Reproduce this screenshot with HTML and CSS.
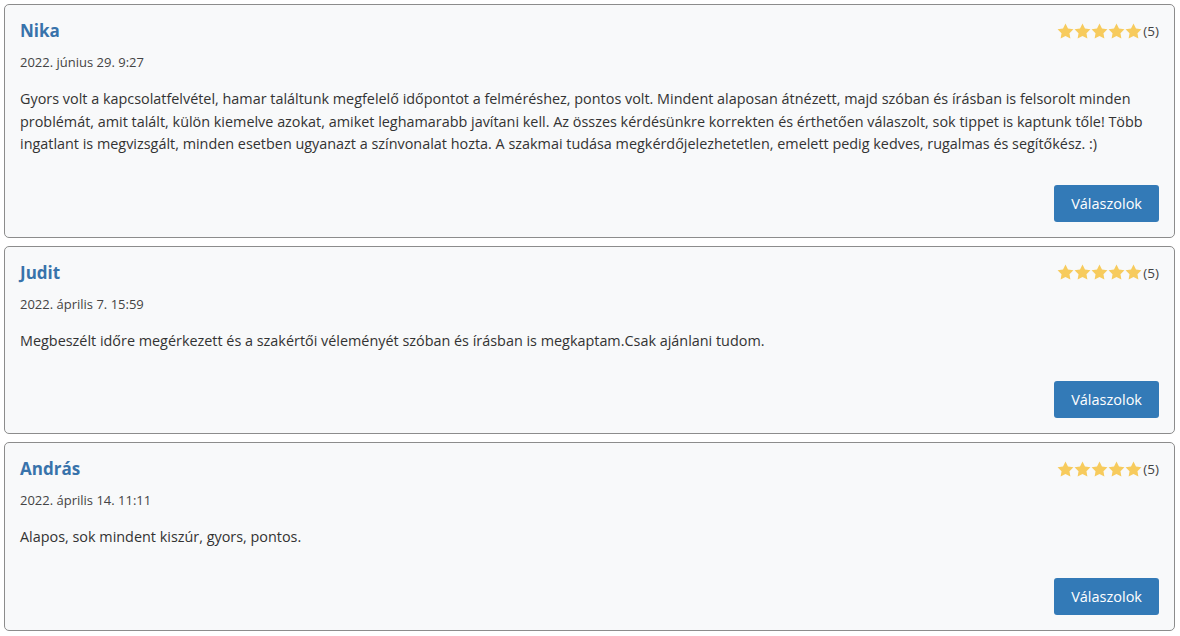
FILE: index.html
```html
<!DOCTYPE html>
<html lang="hu">
<head>
    <meta charset="UTF-8">
    <meta name="viewport" content="width=device-width, initial-scale=1.0">
    <title>Vélemények</title>
    <link rel="stylesheet" href="styles.css">
</head>
<body>
    <div class="review">
        <div class="review-head">
            <h4 class="name">Nika</h4>
            <div class="rating">
                <span class="stars">
                    <svg viewBox="0 0 24 24"><path d="M12 .8l3.5 7 7.7 1.1-5.6 5.4 1.3 7.7L12 18.4 5.1 22l1.3-7.7L.8 8.9l7.7-1.1z"/></svg>
                    <svg viewBox="0 0 24 24"><path d="M12 .8l3.5 7 7.7 1.1-5.6 5.4 1.3 7.7L12 18.4 5.1 22l1.3-7.7L.8 8.9l7.7-1.1z"/></svg>
                    <svg viewBox="0 0 24 24"><path d="M12 .8l3.5 7 7.7 1.1-5.6 5.4 1.3 7.7L12 18.4 5.1 22l1.3-7.7L.8 8.9l7.7-1.1z"/></svg>
                    <svg viewBox="0 0 24 24"><path d="M12 .8l3.5 7 7.7 1.1-5.6 5.4 1.3 7.7L12 18.4 5.1 22l1.3-7.7L.8 8.9l7.7-1.1z"/></svg>
                    <svg viewBox="0 0 24 24"><path d="M12 .8l3.5 7 7.7 1.1-5.6 5.4 1.3 7.7L12 18.4 5.1 22l1.3-7.7L.8 8.9l7.7-1.1z"/></svg>
                </span>
                <span class="count">(5)</span>
            </div>
        </div>
        <div class="date">2022. június 29. 9:27</div>
        <p class="text">Gyors volt a kapcsolatfelvétel, hamar találtunk megfelelő időpontot a felméréshez, pontos volt. Mindent alaposan átnézett, majd szóban és írásban is felsorolt minden problémát, amit talált, külön kiemelve azokat, amiket leghamarabb javítani kell. Az összes kérdésünkre korrekten és érthetően válaszolt, sok tippet is kaptunk tőle! Több ingatlant is megvizsgált, minden esetben ugyanazt a színvonalat hozta. A szakmai tudása megkérdőjelezhetetlen, emelett pedig kedves, rugalmas és segítőkész. :)</p>
        <div class="actions">
            <button class="reply">Válaszolok</button>
        </div>
    </div>

    <div class="review">
        <div class="review-head">
            <h4 class="name">Judit</h4>
            <div class="rating">
                <span class="stars">
                    <svg viewBox="0 0 24 24"><path d="M12 .8l3.5 7 7.7 1.1-5.6 5.4 1.3 7.7L12 18.4 5.1 22l1.3-7.7L.8 8.9l7.7-1.1z"/></svg>
                    <svg viewBox="0 0 24 24"><path d="M12 .8l3.5 7 7.7 1.1-5.6 5.4 1.3 7.7L12 18.4 5.1 22l1.3-7.7L.8 8.9l7.7-1.1z"/></svg>
                    <svg viewBox="0 0 24 24"><path d="M12 .8l3.5 7 7.7 1.1-5.6 5.4 1.3 7.7L12 18.4 5.1 22l1.3-7.7L.8 8.9l7.7-1.1z"/></svg>
                    <svg viewBox="0 0 24 24"><path d="M12 .8l3.5 7 7.7 1.1-5.6 5.4 1.3 7.7L12 18.4 5.1 22l1.3-7.7L.8 8.9l7.7-1.1z"/></svg>
                    <svg viewBox="0 0 24 24"><path d="M12 .8l3.5 7 7.7 1.1-5.6 5.4 1.3 7.7L12 18.4 5.1 22l1.3-7.7L.8 8.9l7.7-1.1z"/></svg>
                </span>
                <span class="count">(5)</span>
            </div>
        </div>
        <div class="date">2022. április 7. 15:59</div>
        <p class="text">Megbeszélt időre megérkezett és a szakértői véleményét szóban és írásban is megkaptam.Csak ajánlani tudom.</p>
        <div class="actions">
            <button class="reply">Válaszolok</button>
        </div>
    </div>

    <div class="review">
        <div class="review-head">
            <h4 class="name">András</h4>
            <div class="rating">
                <span class="stars">
                    <svg viewBox="0 0 24 24"><path d="M12 .8l3.5 7 7.7 1.1-5.6 5.4 1.3 7.7L12 18.4 5.1 22l1.3-7.7L.8 8.9l7.7-1.1z"/></svg>
                    <svg viewBox="0 0 24 24"><path d="M12 .8l3.5 7 7.7 1.1-5.6 5.4 1.3 7.7L12 18.4 5.1 22l1.3-7.7L.8 8.9l7.7-1.1z"/></svg>
                    <svg viewBox="0 0 24 24"><path d="M12 .8l3.5 7 7.7 1.1-5.6 5.4 1.3 7.7L12 18.4 5.1 22l1.3-7.7L.8 8.9l7.7-1.1z"/></svg>
                    <svg viewBox="0 0 24 24"><path d="M12 .8l3.5 7 7.7 1.1-5.6 5.4 1.3 7.7L12 18.4 5.1 22l1.3-7.7L.8 8.9l7.7-1.1z"/></svg>
                    <svg viewBox="0 0 24 24"><path d="M12 .8l3.5 7 7.7 1.1-5.6 5.4 1.3 7.7L12 18.4 5.1 22l1.3-7.7L.8 8.9l7.7-1.1z"/></svg>
                </span>
                <span class="count">(5)</span>
            </div>
        </div>
        <div class="date">2022. április 14. 11:11</div>
        <p class="text">Alapos, sok mindent kiszúr, gyors, pontos.</p>
        <div class="actions">
            <button class="reply">Válaszolok</button>
        </div>
    </div>
</body>
</html>
```

FILE: styles.css
```css
body {
    font-family: 'Open Sans', 'Lato', sans-serif;
    margin: 0;
    padding: 4px 5px 4px 4px;
    background: #fff;
    color: #333;
    display: flex;
    flex-direction: column;
    gap: 8px;
}

.review {
    background: #f8f9fa;
    border: 1px solid #8c8c8c;
    border-radius: 5px;
    padding: 15px;
}

.review-head {
    display: flex;
    justify-content: space-between;
    align-items: flex-start;
}

.name {
    margin: 1px 0 0;
    font-size: 17px;
    line-height: 20px;
    font-weight: 700;
    color: #3873ab;
}

.rating {
    display: flex;
    align-items: center;
    margin-top: 2px;
}

.stars {
    display: flex;
}

.stars svg {
    width: 17px;
    height: 17px;
    fill: #f7cb5d;
}

.count {
    font-size: 13.5px;
    color: #444;
    margin-left: 1px;
}

.date {
    margin-top: 12px;
    font-size: 13px;
    line-height: 18px;
    color: #444;
}

.text {
    margin: 17px 0 0;
    font-size: 14.4px;
    line-height: 22.5px;
    color: #333;
}

.actions {
    display: flex;
    justify-content: flex-end;
    margin-top: 29px;
}

.reply {
    font-family: inherit;
    background-color: #337ab7;
    color: #fff;
    border: none;
    border-radius: 3px;
    height: 37px;
    padding: 0 17px;
    font-size: 14.5px;
    cursor: pointer;
}

.reply:hover {
    background-color: #286090;
}
```
